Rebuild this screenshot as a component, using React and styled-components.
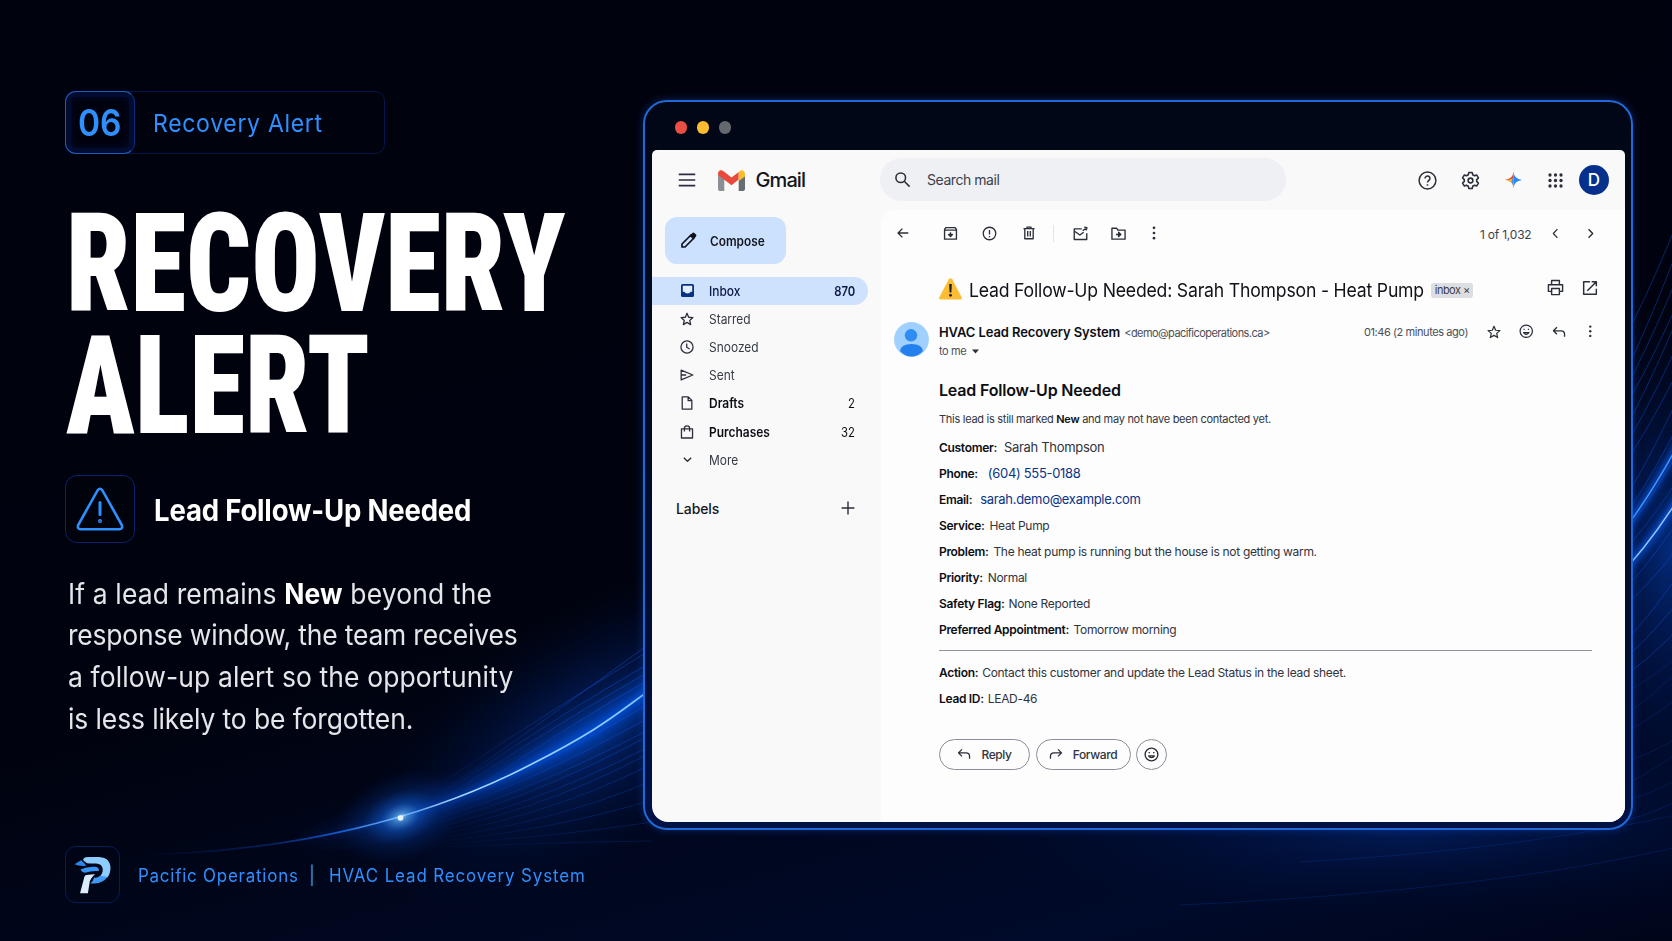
import React from "react";
import styled, { createGlobalStyle } from "styled-components";

const GlobalStyle = createGlobalStyle`
  * {
    box-sizing: border-box;
  }
  body {
    margin: 0;
    background: #00020d;
    font-family: Inter, "Liberation Sans", sans-serif;
  }
`;

const folders = [
  { name: "Inbox", icon: "inbox", count: "870", active: true },
  { name: "Starred", icon: "star" },
  { name: "Snoozed", icon: "clock" },
  { name: "Sent", icon: "send" },
  { name: "Drafts", icon: "file", count: "2", bold: true },
  { name: "Purchases", icon: "bag", count: "32", bold: true },
  { name: "More", icon: "down" },
];

const details = [
  { label: "Customer:", value: "Sarah Thompson", gap: 7, big: true },
  { label: "Phone:", value: "(604) 555-0188", gap: 10, big: true, link: true },
  { label: "Email:", value: "sarah.demo@example.com", gap: 8, big: true, link: true },
  { label: "Service:", value: "Heat Pump", gap: 5 },
  { label: "Problem:", value: "The heat pump is running but the house is not getting warm.", gap: 5 },
  { label: "Priority:", value: "Normal", gap: 5 },
  { label: "Safety Flag:", value: "None Reported", gap: 4 },
  { label: "Preferred Appointment:", value: "Tomorrow morning", gap: 4.5 },
];

const icons = {
  menu: <path d="M1 4.5h22M1 12h22M1 19.5h22" />,
  search: <><circle cx="9.5" cy="9.5" r="6.8" /><path d="M14.5 14.5l7.5 7.5" /></>,
  help: <><circle cx="12" cy="12" r="10.6" /><path d="M8.9 9.4a3.1 3.1 0 1 1 4.9 2.5c-1.1.8-1.8 1.3-1.8 2.7" /><path d="M12 16.6v1.9" /></>,
  gear: <><path d="M9.9 1.8h4.2l.7 3 2.2 1.2 2.9-.9 2.1 3.7-2.2 2.1v2.2l2.2 2.1-2.1 3.7-2.9-.9-2.2 1.2-.7 3H9.9l-.7-3L7 18l-2.9.9L2 15.2l2.2-2.1v-2.2L2 8.8l2.1-3.7L7 6l2.2-1.2z" /><circle cx="12" cy="12" r="3" /></>,
  back: <path d="M21 12H4M11 4.5L3.5 12l7.5 7.5" />,
  archive: <><path d="M2.5 5.5l2-3h15l2 3v15.500h-19zM2.5 6.5h19" /><path d="M12 10v7M8.8 13.8L12 17l3.2-3.2zM8.5 13.5h7" /></>,
  spam: <><circle cx="12" cy="12" r="10" /><path d="M12 6.5v7M12 15.8v2" /></>,
  trash: <><path d="M2.5 4.5h19M8.5 4V2h7v2M4.8 4.5v17.300h14.400V4.5" /><path d="M9.8 8.5v9.500M14.2 8.5v9.500" /></>,
  unread: <><path d="M14 4.5H2v17h20v-10" /><path d="M2.5 8.5l8.5 6 6-4.5" /><path d="M15.5 7.5L21.5 3M18 1.800l4.200 1-1 4.200" /></>,
  move: <><path d="M1.5 3.5h7.500l2 3h11.500v14.500h-21z" /><path d="M8 13.5h7M12.2 10l3.500 3.500-3.500 3.500z" /></>,
  left: <path d="M15.5 4L8 12l7.500 8" />,
  right: <path d="M8.5 4L16 12l-7.500 8" />,
  down: <path d="M4 8l8 8 8-8" />,
  print: <><path d="M6.5 7.500V2h11v5.500M6.5 17.500H2V8h20v9.500h-4.500" /><path d="M6.5 13.500h11V22h-11z" /></>,
  open: <path d="M12 2.500H2.500v19h19V13M14.500 2.500h7v7M21.500 2.500L8 16" />,
  star: <path d="M12 2.200l2.800 6.800 7.400.6-5.600 4.800 1.700 7.200L12 17.800l-6.300 3.800 1.700-7.200-5.600-4.800L9.200 9z" />,
  smile: <><circle cx="12" cy="12" r="10.200" /><path d="M7.500 14.200a5 5 0 0 0 9 0z" /><path d="M8.400 8v1.800M15.600 8v1.800" /></>,
  reply: <path d="M8.500 4L2.500 10l6 6M3 10h12.500q6 0 6 6v4" />,
  forward: <path d="M15.500 4l6 6-6 6M21 10H8.500q-6 0-6 6v4" />,
  clock: <><circle cx="12" cy="12" r="10.400" /><path d="M11.500 6v6.500l5 3" /></>,
  send: <path d="M2 3.500L22 12 2 20.500zM2.500 12h8" />,
  file: <path d="M3.800 1.500h10.500l6 6v15H3.800zM14 2v6h6" />,
  bag: <path d="M2.500 6.500h19v15.800h-19zM7.500 11V5.500a4.500 4 0 0 1 9 0V11" />,
  plus: <path d="M12 1v22M1 12h22" />,
};

function Icon({ name, size = 16, weight = 2 }) {
  return (
    <Glyph width={size} height={size} viewBox="0 0 24 24" strokeWidth={weight}>
      {icons[name]}
    </Glyph>
  );
}

function Dots({ size = 14 }) {
  return (
    <svg width={size} height={size} viewBox="0 0 14 14" fill="#2b2f3a">
      <circle cx="7" cy="1.8" r="1.35" />
      <circle cx="7" cy="7" r="1.35" />
      <circle cx="7" cy="12.2" r="1.35" />
    </svg>
  );
}

const beamPath = "M130 855C300 853 430 815 520 770S620 710 660 683";

function Waves() {
  // strands above the beam run nearly straight, the ones below flatten out
  const above = [[455, 783, 648], [430, 790, 655], [470, 775, 668], [445, 797, 676], [480, 785, 684]];
  const below = [702, 716, 728, 734, 745, 752, 764, 781, 800, 822, 841];
  // strands that leave the window on the right
  const tail = [];
  for (let i = 0; i < 24; i++) {
    const y = 300 + i * 22 + ((i * 37) % 13);
    const rise = Math.max(18, 110 - i * 4.5 + ((i * 29) % 17));
    tail.push(`M1600 ${y + rise * 0.75} Q1645 ${y + 8} 1690 ${y - rise}`);
  }
  return (
    <Backdrop viewBox="0 0 1672 941" fill="none">
      <defs>
        <radialGradient id="glow">
          <stop offset="0" stopColor="#0647c4" stopOpacity="0.55" />
          <stop offset="0.5" stopColor="#032a86" stopOpacity="0.26" />
          <stop offset="1" stopColor="#00103c" stopOpacity="0" />
        </radialGradient>
        <radialGradient id="spark">
          <stop offset="0" stopColor="#e8f5ff" />
          <stop offset="0.08" stopColor="#5cb0ff" stopOpacity="0.9" />
          <stop offset="0.3" stopColor="#1363e0" stopOpacity="0.6" />
          <stop offset="0.6" stopColor="#0845b8" stopOpacity="0.25" />
          <stop offset="1" stopColor="#0437a8" stopOpacity="0" />
        </radialGradient>
        <linearGradient id="beam" gradientUnits="userSpaceOnUse" x1="140" y1="0" x2="660" y2="0">
          <stop offset="0" stopColor="#0a3fb8" stopOpacity="0" />
          <stop offset="0.25" stopColor="#0b44b8" stopOpacity="0.4" />
          <stop offset="0.4" stopColor="#1a6cf0" stopOpacity="0.9" />
          <stop offset="0.48" stopColor="#b8e0ff" />
          <stop offset="1" stopColor="#7cc2ff" />
        </linearGradient>
        <linearGradient id="haze" gradientUnits="userSpaceOnUse" x1="290" y1="0" x2="560" y2="0">
          <stop offset="0" stopColor="#0449d8" stopOpacity="0" />
          <stop offset="1" stopColor="#0555ea" stopOpacity="0.8" />
        </linearGradient>
        <linearGradient id="strand" gradientUnits="userSpaceOnUse" x1="420" y1="0" x2="600" y2="0">
          <stop offset="0" stopColor="#0d4cd0" stopOpacity="0" />
          <stop offset="1" stopColor="#0d4cd0" stopOpacity="0.5" />
        </linearGradient>
        <filter id="soft" x="-20%" y="-40%" width="140%" height="180%">
          <feGaussianBlur stdDeviation="10" />
        </filter>
        <filter id="thin" x="-20%" y="-40%" width="140%" height="180%">
          <feGaussianBlur stdDeviation="3" />
        </filter>
      </defs>
      <ellipse cx="590" cy="735" rx="260" ry="125" fill="url(#glow)" transform="rotate(-32 590 735)" />
      <ellipse cx="1670" cy="550" rx="110" ry="250" fill="url(#glow)" />
      <ellipse cx="1400" cy="830" rx="480" ry="90" fill="url(#glow)" opacity="0.5" />
      {above.map(([x, y, end]) => (
        <path key={end} d={`M${x - 40} ${y + 28} Q${x + 80} ${y - 55} 652 ${end - 6}`} stroke="url(#strand)" />
      ))}
      {below.map((end, i) => (
        <path key={end} d={`M${380 + i * 4} ${828 + i * 2} Q${500 + i * 6} ${792 + i * 5} 652 ${end}`} stroke="url(#strand)" strokeOpacity={1 - i * 0.06} />
      ))}
      {tail.map((d, i) => (
        <path key={i} d={d} stroke="#0d4fd8" strokeOpacity={i < 17 ? 0.45 : 0.2} />
      ))}
      <path d="M1180 905Q1500 890 1690 844M1300 862Q1520 850 1690 812" stroke="#0d4fd8" strokeOpacity="0.2" />
      <path d={beamPath} stroke="url(#haze)" strokeWidth="18" filter="url(#soft)" />
      <path d={beamPath} stroke="url(#haze)" strokeWidth="5" filter="url(#thin)" />
      <path d={beamPath} stroke="url(#beam)" strokeWidth="1.7" />
      <ellipse cx="401" cy="817" rx="66" ry="44" fill="url(#spark)" transform="rotate(-20 401 817)" opacity="0.8" />
      <circle cx="400.5" cy="818" r="2.8" fill="#eaf6ff" />
      <path d="M1615 542Q1650 498 1685 432M1615 580Q1650 545 1685 488" stroke="#0a5cf0" strokeWidth="9" filter="url(#thin)" opacity="0.6" />
      <path d="M1615 542Q1650 498 1685 432" stroke="#3d98ff" strokeWidth="1.5" />
      <path d="M1615 580Q1650 545 1685 488" stroke="#8ccaff" strokeWidth="1.5" />
    </Backdrop>
  );
}

function Intro() {
  return (
    <Left>
      <Badge>
        <BadgeNumber><span>06</span></BadgeNumber>
        <BadgeText>Recovery Alert</BadgeText>
      </Badge>
      <Title>RECOVERY<br />ALERT</Title>
      <AlertRow>
        <AlertBox>
          <svg width="48" height="44" viewBox="0 0 48 44" fill="none" stroke="#2f8fff" strokeLinecap="round">
            <path d="M21.7 3.200q2.300-3 4.600 0L45.800 38q1.300 4-2.600 4.300H4.800Q.9 42 2.200 38z" strokeWidth="2.600" />
            <path d="M24 15.500v12" strokeWidth="3" />
            <circle cx="24" cy="34" r="0.7" strokeWidth="2.600" />
          </svg>
        </AlertBox>
        <AlertTitle>Lead Follow-Up Needed</AlertTitle>
      </AlertRow>
      <Summary>
        <Line $track={0.15}>If a lead remains <b>New</b> beyond the</Line>
        <Line $track={-0.2}>response window, the team receives</Line>
        <Line $track={0.13}>a follow-up alert so the opportunity</Line>
        <Line $track={-0.11}>is less likely to be forgotten.</Line>
      </Summary>
      <Footer>
        <LogoBox>
          <svg width="54" height="56" viewBox="30 34 162 168">
            <path d="M82 72Q84 63 96 63H132Q166 66 166 98Q165 116 156 126L132 124Q144 112 142 98Q140 84 122 83H102Q94 83 90 79Z" fill="#8ecbff" />
            <path d="M157 124Q144 142 118 144L104 144Q114 136 116 126Q126 128 134 120Z" fill="#3f98f5" />
            <path d="M74 101Q96 91 120 93Q133 95 130 106Q110 104 88 111Q78 109 74 101Z" fill="#3793f5" />
            <path d="M56 85L76 73L84 80L92 90Q70 92 56 85Z" fill="#2f86e8" />
            <path d="M86 124Q88 117 98 117L119 116Q104 128 102 142L97 174H73Z" fill="#dcecff" />
          </svg>
        </LogoBox>
        <Company>Pacific Operations</Company>
        <Bar>|</Bar>
        <System>HVAC Lead Recovery System</System>
      </Footer>
    </Left>
  );
}

function MailHeader() {
  return (
    <Header>
      <Brand>
        <Icon name="menu" size={18} weight={2.2} />
        <svg width="27" height="21" viewBox="0 0 27 21">
          <path d="M0 4l6.300 5V21H2Q0 21 0 19z" fill="#8b9097" />
          <path d="M27 4l-6.300 5V21H25q2 0 2-2z" fill="#686d72" />
          <path d="M0 5V3.500Q.5 0 3.500.3 5 .5 6 1.500L13.500 7.500 20.700 2v7.500L13.500 15.300z" fill="#e84a3d" />
          <path d="M20.700 2Q23-.5 25.500.8 27 2 27 4.500v2L20.700 11z" fill="#fbbc2e" />
        </svg>
        <BrandName>Gmail</BrandName>
      </Brand>
      <Search>
        <Icon name="search" size={17} weight={2.2} />
        Search mail
      </Search>
      <HeaderTools>
        <Slot $w={43}><Icon name="help" size={19} weight={1.9} /></Slot>
        <Slot $w={43}><Icon name="gear" size={19} weight={2} /></Slot>
        <Slot $w={42.5}>
          <svg width="17" height="18" viewBox="0 0 18 18">
            <path d="M9 0Q9.500 8 18 9Q9.500 10 9 18z" fill="#2f86f6" />
            <path d="M9 0Q8.500 8 0 9H9z" fill="#ea4335" />
            <path d="M0 9Q8.500 10 9 18V6.500Q6 9 0 9z" fill="#fbb62c" />
            <path d="M9 5v13Q8.800 13 6.600 11z" fill="#3b8df5" />
          </svg>
        </Slot>
        <Slot $w={42.5}>
          <svg width="15" height="15" viewBox="0 0 15 15" fill="#2b2f3a">
            {[2, 7.5, 13].map((y) => [2, 7.5, 13].map((x) => <circle key={x + "-" + y} cx={x} cy={y} r="1.65" />))}
          </svg>
        </Slot>
        <Account>D</Account>
      </HeaderTools>
    </Header>
  );
}

function Folders() {
  return (
    <Sidebar>
      <Compose>
        <svg width="17" height="17" viewBox="0 0 17 17">
          <path d="M2 15v-3L11 3l3 3-9 9z" fill="none" stroke="#10131c" strokeWidth="1.7" strokeLinejoin="round" />
          <path d="M9.600 3.800L12.400 1q1-.8 2 0l1.600 1.600q.8 1 0 2L13.200 7.400z" fill="#10131c" />
        </svg>
        <span>Compose</span>
      </Compose>
      {folders.map((f) => (
        <Folder key={f.name} $active={f.active} $bold={f.bold}>
          {f.icon === "inbox" ? (
            <svg width="13" height="13" viewBox="0 0 13 13">
              <rect width="13" height="13" rx="1.5" fill="#0a3183" />
              <path d="M1.800 1.800h9.400v6H9.600a3.200 2.400 0 0 1-6.200 0H1.800z" fill="#e4eeff" />
            </svg>
          ) : (
            <Icon name={f.icon} size={f.icon === "down" ? 11 : 14} weight={f.icon === "down" ? 3 : 2.2} />
          )}
          <FolderName>{f.name}</FolderName>
          <Count $bold={f.active}>{f.count}</Count>
        </Folder>
      ))}
      <Labels>
        <span>Labels</span>
        <Icon name="plus" size={14} weight={2.4} />
      </Labels>
    </Sidebar>
  );
}

function Message() {
  return (
    <Content>
      <Toolbar>
        <Slot $w={44}><Icon name="back" size={14} weight={2.3} /></Slot>
        <Slot $w={50}><Icon name="archive" size={15} weight={2.2} /></Slot>
        <Slot $w={29}><Icon name="spam" size={15} weight={2.1} /></Slot>
        <Slot $w={49}><Icon name="trash" size={14} weight={2.3} /></Slot>
        <Divider />
        <Slot $w={52}><Icon name="unread" size={15} weight={2.2} /></Slot>
        <Slot $w={24}><Icon name="move" size={15} weight={2.2} /></Slot>
        <Slot $w={47}><Dots /></Slot>
        <Paging>1 of 1,032</Paging>
        <Slot $w={34}><Icon name="left" size={13} weight={2.3} /></Slot>
        <Slot $w={35}><Icon name="right" size={13} weight={2.6} /></Slot>
      </Toolbar>
      <SubjectRow>
        <svg width="23" height="22" viewBox="0 0 23 22">
          <path d="M9.800 1.200q1.700-2 3.400 0L22.700 19.300q.6 2-1.400 2.200H1.700q-2-.2-1.400-2.200z" fill="#fbbd35" />
          <path d="M10.200 6h2.600l-.4 8.400h-1.800z" fill="#1b1c22" />
          <circle cx="11.5" cy="17.3" r="1.4" fill="#1b1c22" />
        </svg>
        <Subject>Lead Follow-Up Needed: Sarah Thompson - Heat Pump</Subject>
        <Chip>inbox ×</Chip>
        <RowEnd>
          <Slot $w={35}><Icon name="print" size={17} weight={2} /></Slot>
          <Slot $w={35}><Icon name="open" size={16} weight={2.2} /></Slot>
        </RowEnd>
      </SubjectRow>
      <SenderRow>
        <svg width="35" height="35" viewBox="0 0 35 35">
          <circle cx="17.5" cy="17.5" r="17.4" fill="#9fd0ff" />
          <circle cx="17" cy="13.3" r="6.2" fill="#2f8cf2" />
          <path d="M6 29q1-7 11.500-7T29 29q-5 5.500-11.500 5.500T6 29z" fill="#2480ee" />
        </svg>
        <Sender>
          <div>
            <SenderName>HVAC Lead Recovery System</SenderName>
            <Address>&lt;demo@pacificoperations.ca&gt;</Address>
          </div>
          <ToMe>
            to me
            <svg width="7" height="5" viewBox="0 0 7 5"><path d="M0 .5h7L3.500 4.500z" fill="#2b2f3a" /></svg>
          </ToMe>
        </Sender>
        <RowEnd>
          <Time>01:46 (2 minutes ago)</Time>
          <Slot $w={33}><Icon name="star" size={14} weight={2.1} /></Slot>
          <Slot $w={32}><Icon name="smile" size={14.5} weight={2} /></Slot>
          <Slot $w={34}><Icon name="reply" size={14} weight={2.3} /></Slot>
          <Slot $w={29}><Dots size={12.5} /></Slot>
        </RowEnd>
      </SenderRow>
      <Body>
        <Heading>Lead Follow-Up Needed</Heading>
        <Lead>This lead is still marked <b>New</b> and may not have been contacted yet.</Lead>
        {details.map((d) => (
          <Field key={d.label} $gap={d.gap} $big={d.big} $link={d.link}>
            <b>{d.label}</b>
            <span>{d.value}</span>
          </Field>
        ))}
        <Rule />
        <Field $gap={4}><b>Action:</b><span>Contact this customer and update the Lead Status in the lead sheet.</span></Field>
        <Field $gap={4}><b>Lead ID:</b><span>LEAD-46</span></Field>
        <Actions>
          <Action $w={91}><Icon name="reply" size={14} weight={2.2} />Reply</Action>
          <Action $w={95}><Icon name="forward" size={14} weight={2.2} />Forward</Action>
          <Action $w={31}><Icon name="smile" size={15} weight={2.2} /></Action>
        </Actions>
      </Body>
    </Content>
  );
}

export default function App() {
  return (
    <Page>
      <GlobalStyle />
      <Waves />
      <Intro />
      <Window>
        <TitleBar>
          <Light $color="#e94f42" />
          <Light $color="#fbbc31" />
          <Light $color="#65696e" />
        </TitleBar>
        <Mail>
          <MailHeader />
          <MailBody>
            <Folders />
            <Message />
          </MailBody>
        </Mail>
      </Window>
    </Page>
  );
}

const Page = styled.div`
  position: relative;
  display: flex;
  width: 1672px;
  height: 941px;
  overflow: hidden;
  background: linear-gradient(165deg, #00020d 0%, #00030f 55%, #000a2a 88%, #00051a 100%);
`;

const Backdrop = styled.svg`
  position: absolute;
  inset: 0;
  width: 1672px;
  height: 941px;
`;

const Glyph = styled.svg`
  flex: none;
  fill: none;
  stroke: #2b2f3a;
  stroke-linejoin: round;
`;

/* left column */
const Left = styled.div`
  position: relative;
  width: 643px;
  padding: 91px 0 0 65px;
`;

const Badge = styled.div`
  display: flex;
  align-items: center;
  width: 320px;
  height: 63px;
  border: 1px solid #04174a;
  border-radius: 10px;
`;

const BadgeNumber = styled.div`
  display: flex;
  align-items: center;
  justify-content: center;
  width: 70px;
  height: 63px;
  margin: -1px 0 -1px -1px;
  border: 1px solid #1d5dc0;
  border-right-color: #0a2c78;
  border-radius: 11px;
  box-shadow: inset 0 0 0 5px #020c30, inset 0 0 12px 3px #020c30;
  color: #2f8fff;
  font-size: 36.5px;
  font-weight: 600;

  span {
    transform: scaleX(0.92);
  }
`;

const BadgeText = styled.div`
  margin-left: 18px;
  color: #2f8fff;
  font-size: 24.5px;
  letter-spacing: 0.72px;
  white-space: nowrap;
  transform: scaleX(0.94);
  transform-origin: left;
`;

const Title = styled.h1`
  margin: 48.7px 0 0 1px;
  color: #fff;
  font-family: "Roboto Condensed", Roboto, sans-serif;
  font-size: 137.8px;
  font-weight: 900;
  line-height: 122.4px;
  white-space: nowrap;
  transform: scaleX(0.826);
  transform-origin: left;
`;

const AlertRow = styled.div`
  display: flex;
  align-items: center;
  margin-top: 27.5px;
`;

const AlertBox = styled.div`
  display: flex;
  align-items: center;
  justify-content: center;
  width: 70px;
  height: 68px;
  border: 1px solid #06236b;
  border-radius: 12px;
  background: #00020c;
`;

const AlertTitle = styled.h2`
  margin: 2px 0 0 18.5px;
  color: #fff;
  font-size: 30px;
  font-weight: 650;
  letter-spacing: -0.2px;
  white-space: nowrap;
  transform: scaleX(0.918);
  transform-origin: left;
`;

const Summary = styled.p`
  margin: 30.5px 0 0 3px;
  color: #e4e6ea;
  font-size: 28px;
  line-height: 41.7px;
  white-space: nowrap;
  transform: scaleX(0.945);
  transform-origin: left;

  b {
    color: #fff;
  }
`;

const Line = styled.span`
  display: block;
  letter-spacing: ${(p) => p.$track}px;
`;

const Footer = styled.div`
  display: flex;
  align-items: center;
  margin-top: 105.7px;
  color: #2f8fff;
  font-size: 18px;
  letter-spacing: 0.83px;
  white-space: nowrap;

  span {
    padding-top: 2px;
  }
`;

const LogoBox = styled.div`
  display: flex;
  align-items: center;
  justify-content: center;
  width: 55px;
  height: 57px;
  border: 1px solid #041c58;
  border-radius: 11px;
`;

const Company = styled.span`
  width: 171px;
  margin-left: 18px;
  transform: scaleX(0.94);
  transform-origin: left;
`;

const Bar = styled.span`
  width: 20px;
`;

const System = styled.span`
  letter-spacing: 0.93px;
  transform: scaleX(0.94);
  transform-origin: left;
`;

/* browser window */
const Window = styled.div`
  position: relative;
  width: 990px;
  height: 730px;
  margin-top: 100px;
  padding: 0 6px 0 7px;
  border: 2px solid #1f69d8;
  border-radius: 24px;
  background: linear-gradient(#010716 0%, #010a20 40%, #001245 100%);
  box-shadow: 0 0 9px rgba(18, 88, 220, 0.4);
`;

const TitleBar = styled.div`
  display: flex;
  align-items: center;
  gap: 9.5px;
  height: 48px;
  padding: 3px 0 0 22.5px;
`;

const Light = styled.span`
  width: 12.5px;
  height: 12.5px;
  border-radius: 50%;
  background: ${(p) => p.$color};
`;

const Mail = styled.div`
  display: flex;
  flex-direction: column;
  height: 672px;
  overflow: hidden;
  border-radius: 5px 5px 16px 16px;
  background: #f9f9fa;
  color: #14161d;
`;

const Header = styled.header`
  display: flex;
  align-items: center;
  height: 60px;
  padding-right: 16px;
`;

const Brand = styled.div`
  display: flex;
  align-items: center;
  width: 228px;
  padding-left: 26px;

  svg + svg {
    margin: 0 11px 0 21.5px;
  }
`;

const BrandName = styled.span`
  font-size: 20px;
  font-weight: 450;
  letter-spacing: -0.9px;
`;

const Search = styled.div`
  display: flex;
  align-items: center;
  gap: 16px;
  width: 406px;
  height: 43px;
  margin-bottom: 1px;
  padding-left: 14px;
  border-radius: 22px;
  background: #eff0f4;
  color: #3b3f49;
  font-size: 14px;
  letter-spacing: -0.45px;
`;

const HeaderTools = styled.div`
  display: flex;
  align-items: center;
  margin-left: auto;
`;

const Slot = styled.span`
  display: flex;
  flex: none;
  align-items: center;
  justify-content: center;
  width: ${(p) => p.$w}px;
`;

const Account = styled.span`
  display: flex;
  align-items: center;
  justify-content: center;
  width: 30px;
  height: 30px;
  margin-left: 2px;
  border-radius: 50%;
  background: #06308c;
  color: #fff;
  font-size: 17px;
  font-weight: 500;
`;

const MailBody = styled.div`
  display: flex;
  flex: 1;
`;

const Sidebar = styled.nav`
  width: 229px;
  padding-top: 7.3px;
`;

const Compose = styled.div`
  display: flex;
  align-items: center;
  gap: 13.5px;
  width: 121px;
  height: 47px;
  margin: 0 0 12.3px 13px;
  padding-left: 14.5px;
  border-radius: 12px;
  background: #cbe1fe;
  font-size: 13px;
  font-weight: 600;

  span {
    transform: scaleX(0.91);
    transform-origin: left;
  }
`;

const Folder = styled.div`
  display: grid;
  grid-template-columns: 14px 1fr auto;
  gap: 15px;
  align-items: center;
  width: 216px;
  height: 28.2px;
  padding: 0 13px 0 28px;
  border-radius: 0 14px 14px 0;
  background: ${(p) => (p.$active ? "#cee1fd" : "none")};
  color: ${(p) => (p.$active ? "#0a1a44" : p.$bold ? "#0c0e14" : "#363a44")};
  font-size: 13px;
  font-weight: ${(p) => (p.$active ? 550 : p.$bold ? 600 : 400)};

  svg {
    justify-self: center;
  }
`;

const FolderName = styled.span`
  transform: scaleX(0.92);
  transform-origin: left;
`;

const Count = styled.span`
  font-weight: ${(p) => (p.$bold ? 600 : 400)};
  transform: scaleX(0.87);
  transform-origin: right;
`;

const Labels = styled.div`
  display: flex;
  align-items: center;
  justify-content: space-between;
  width: 216px;
  height: 28px;
  margin-top: 20.5px;
  padding: 0 13.5px 0 24px;
  font-size: 14px;
  font-weight: 500;
  letter-spacing: -0.1px;
`;

const Content = styled.main`
  flex: 1;
  border-radius: 14px 0 0 0;
  background: #fdfdfd;
`;

const Toolbar = styled.div`
  display: flex;
  align-items: center;
  height: 46px;
  padding-right: 17.5px;
`;

const Divider = styled.span`
  width: 1px;
  height: 17px;
  background: #e4e5e9;
`;

const Paging = styled.span`
  margin: 3px 7px 0 auto;
  color: #3b3f49;
  font-size: 12px;
  letter-spacing: -0.2px;
`;

const SubjectRow = styled.div`
  display: flex;
  align-items: center;
  height: 28px;
  margin-top: 19px;
  padding: 0 17.5px 0 58px;
`;

const Subject = styled.h3`
  margin: 2px 0 0 7px;
  font-size: 19px;
  font-weight: 400;
  letter-spacing: -0.21px;
  white-space: nowrap;
  color: #101218;
  transform: scaleX(0.928);
  transform-origin: left;
`;

const Chip = styled.span`
  width: 42px;
  margin: 2px 0 0 -28px;
  border-radius: 3px;
  background: #dddee2;
  color: #3b3f49;
  font-size: 11px;
  line-height: 15px;
  letter-spacing: -0.5px;
  text-align: center;
  z-index: 1;
`;

const RowEnd = styled.div`
  display: flex;
  align-items: center;
  margin-left: auto;
  padding-bottom: 3px;
`;

const SenderRow = styled.div`
  display: flex;
  align-items: flex-start;
  margin-top: 19px;
  padding: 0 20px 0 13px;

  ${RowEnd} {
    height: 19px;
    padding: 0;
  }
`;

const Sender = styled.div`
  margin: -1px 0 0 10px;
  line-height: 20px;
  white-space: nowrap;
`;

const SenderName = styled.b`
  font-size: 13px;
  font-weight: 600;
  letter-spacing: -0.1px;
  color: #0c0e14;
`;

const Address = styled.span`
  margin-left: 4px;
  color: #4b4f59;
  font-size: 11px;
  letter-spacing: -0.56px;
`;

const ToMe = styled.div`
  display: flex;
  align-items: center;
  gap: 6px;
  color: #4b4f59;
  font-size: 11px;
  line-height: 17px;
  letter-spacing: -0.4px;
`;

const Time = styled.span`
  margin-right: 9px;
  color: #4b4f59;
  font-size: 11px;
  letter-spacing: -0.42px;
`;

const Body = styled.article`
  padding: 16.5px 33.5px 0 58px;
`;

const Heading = styled.h4`
  margin: 0;
  font-size: 16px;
  font-weight: 600;
  line-height: 26px;
  letter-spacing: -0.18px;
  color: #0c0e14;
`;

const Lead = styled.p`
  margin: 4.5px 0 2px;
  color: #30343e;
  font-size: 11px;
  line-height: 25px;
  letter-spacing: -0.28px;

  b {
    color: #0c0e14;
    font-weight: 600;
  }
`;

const Field = styled.div`
  display: flex;
  align-items: center;
  gap: ${(p) => p.$gap}px;
  height: 26px;
  font-size: 12px;
  letter-spacing: -0.31px;
  white-space: nowrap;

  b {
    font-weight: 600;
    color: #0c0e14;
  }
  span {
    color: ${(p) => (p.$link ? "#0b3386" : "#30343e")};
    font-size: ${(p) => (p.$big ? 13 : 12)}px;
  }
`;

const Rule = styled.hr`
  height: 1px;
  margin: 8px 0;
  border: 0;
  background: #8f929d;
`;

const Actions = styled.div`
  display: flex;
  gap: 5.5px;
  margin-top: 27.5px;
`;

const Action = styled.div`
  display: flex;
  align-items: center;
  justify-content: center;
  gap: 10px;
  width: ${(p) => p.$w}px;
  height: 31px;
  border: 1px solid #8b8e99;
  border-radius: 16px;
  color: #30343e;
  font-size: 12px;
  font-weight: 500;
  letter-spacing: -0.4px;
`;
